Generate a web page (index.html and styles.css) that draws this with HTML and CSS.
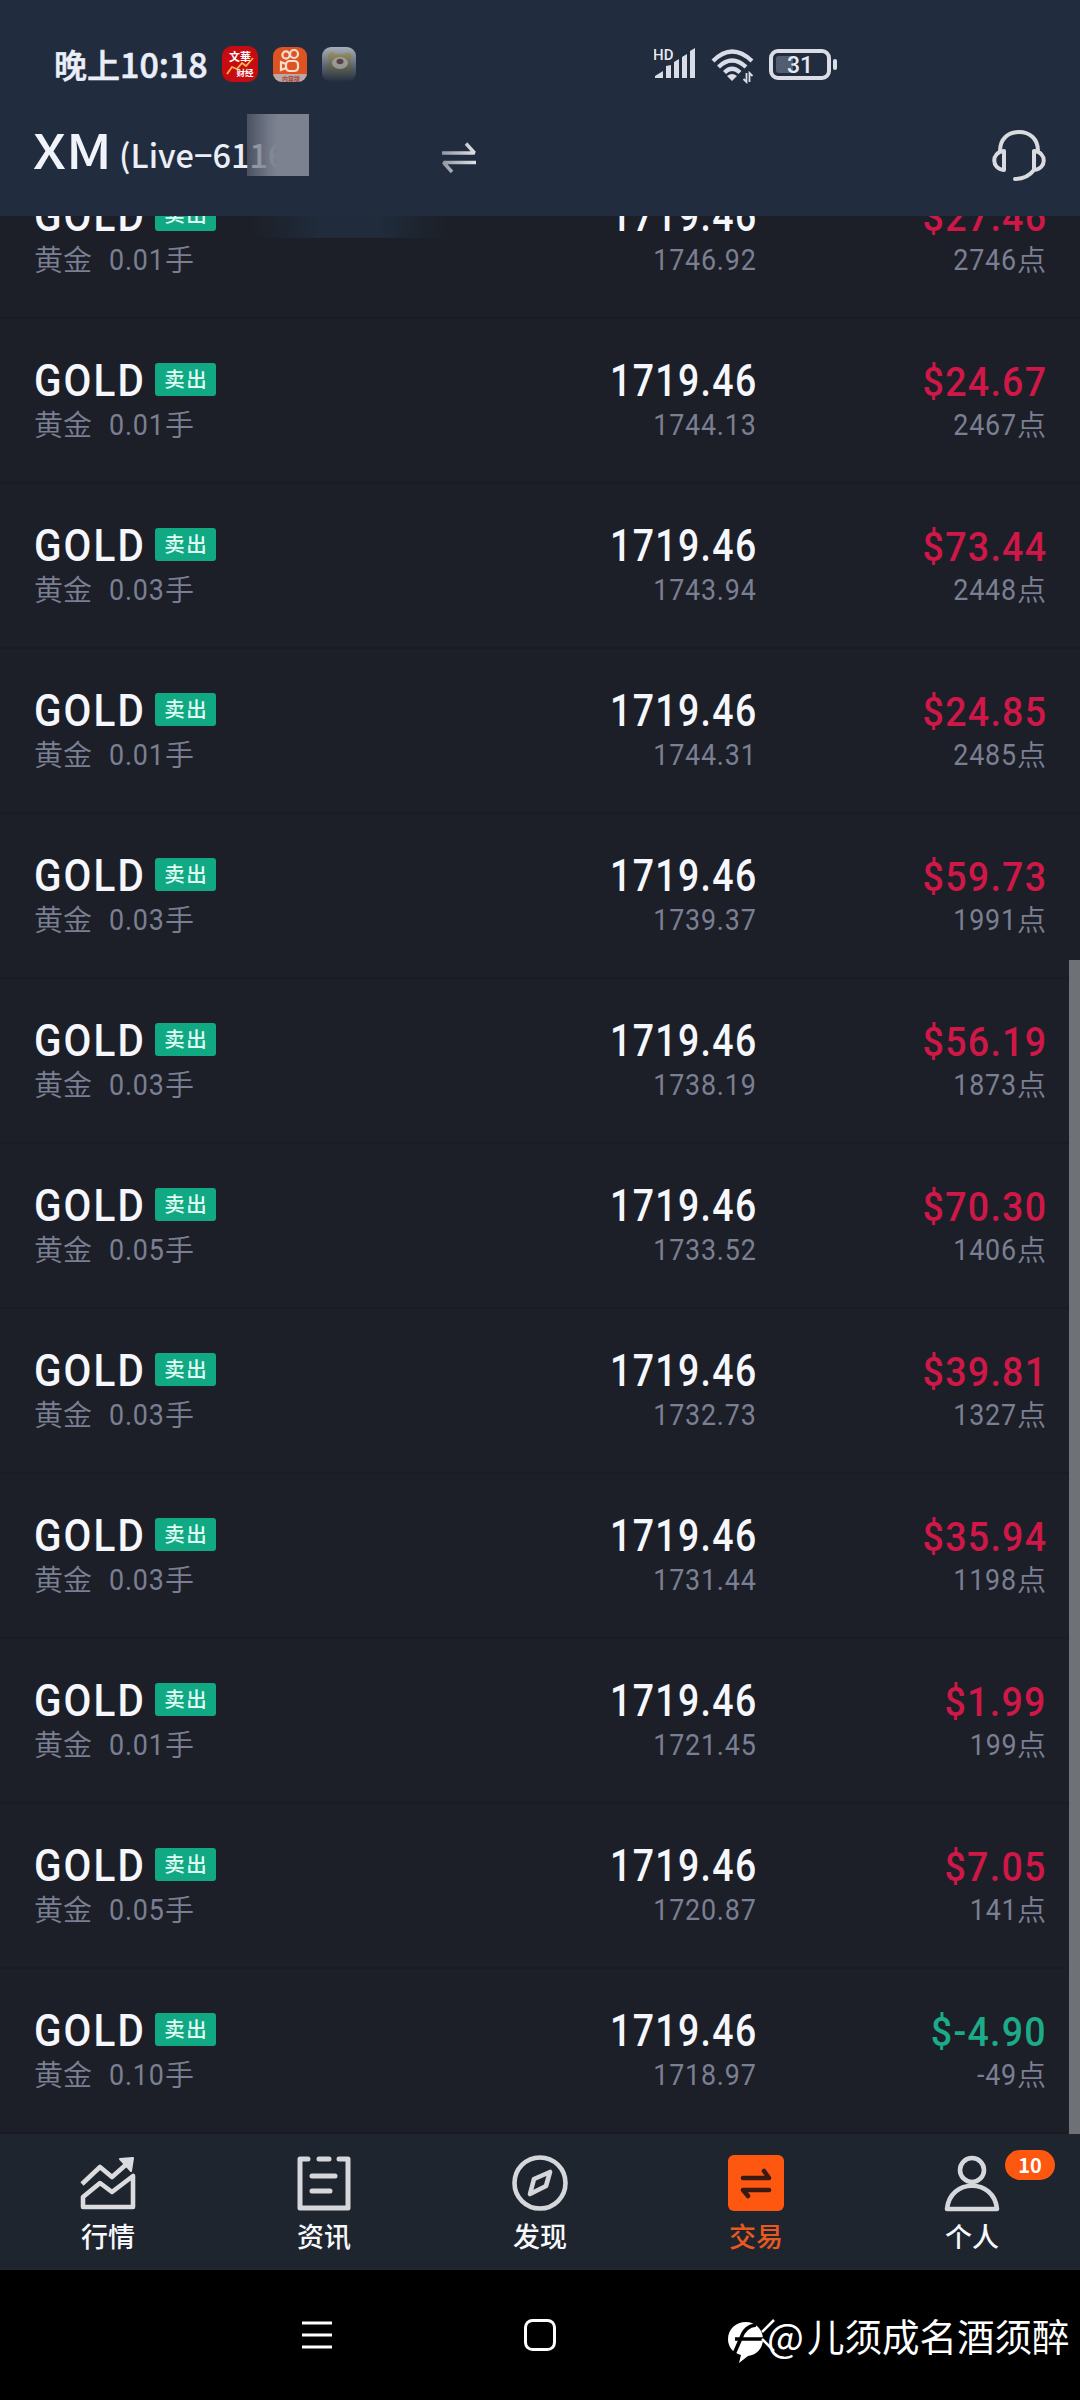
FILE: index.html
```html
<!DOCTYPE html>
<html lang="zh-CN">
<head>
<meta charset="utf-8">
<title>交易</title>
<link rel="stylesheet" href="styles.css">
</head>
<body>
<div class="screen">
  <header class="header">
    <div class="status">
      <span class="clock"><span class="clock-cn">晚上</span>10:18</span>
      <div class="notices">
        <svg width="36" height="36" viewBox="0 0 36 36"><rect width="36" height="36" rx="10" fill="#c60c10"/><text x="18" y="15" class="mini" font-size="11" text-anchor="middle">文華</text><path d="M5 28l5-7 5 2 5-6 4 3 7-8" fill="none" stroke="#ffb54a" stroke-width="1.8"/><text x="23" y="30" class="mini" font-size="8.5" text-anchor="middle">财经</text></svg>
        <svg width="34" height="35" viewBox="0 0 34 35"><defs><clipPath id="ks"><rect width="34" height="35" rx="9"/></clipPath></defs><g clip-path="url(#ks)"><rect width="34" height="35" fill="#dd5422"/><rect y="27" width="34" height="8" fill="#b9a8a5"/></g><g fill="none" stroke="#f6ddcf" stroke-width="2.2"><circle cx="13" cy="8" r="3.6"/><circle cx="21" cy="7" r="4"/><rect x="13" y="14" width="12" height="10" rx="3.5"/><path d="M13 17l-5-2v8l5-2"/></g><text x="18" y="33.500" font-size="6" class="mini red" text-anchor="middle">内容版</text></svg>
        <svg width="34" height="35" viewBox="0 0 34 35"><defs><linearGradient id="fade" x2="0" y2="1"><stop stop-color="#a9afba"/><stop offset=".5" stop-color="#626b76"/><stop offset="1" stop-color="#212c3e"/></linearGradient><linearGradient id="bear" x2="0" y2="1"><stop stop-color="#9a8f50"/><stop offset="1" stop-color="#3a4144"/></linearGradient></defs><rect width="34" height="35" rx="9" fill="url(#fade)"/><path d="M8 30q-5-7-1-16-3-6 1-9 4-1 5 2h9q2-3 6-1 3 3 0 8 4 9 0 16z" fill="url(#bear)" opacity=".75"/><ellipse cx="18" cy="16" rx="8" ry="6" fill="#a7aaac" opacity=".75"/><ellipse cx="18" cy="14.500" rx="3.500" ry="2.800" fill="#574347"/></svg>
      </div>
      <div class="signals">
        <svg class="cell" width="42" height="32" viewBox="0 0 42 32"><text x="-1" y="12" font-size="15" class="hd">HD</text><path d="M1 30v-2l8-5v7zM12 18l5-1v13h-5zM20 14l5-3v19h-5zM28 9l5-3v24h-5zM36 3l5-3v30h-5z" fill="#dadde6"/></svg>
        <svg class="wifi" width="44" height="36" viewBox="0 0 44 36"><g fill="none" stroke="#dadde6" stroke-width="4.2"><path d="M2 13Q21-6 41 13M7.5 19Q21 6 35 19M13.500 24.500Q21 17 29 24.500"/></g><path d="M16 28q5-4 10 0l-5 5z" fill="#dadde6"/><path d="M35.500 25v9l-3-3M38.500 34v-9l3 3" fill="none" stroke="#dadde6" stroke-width="1.8"/></svg>
        <svg width="70" height="31" viewBox="0 0 70 31"><rect x="2" y="2" width="58" height="27" rx="7" fill="none" stroke="#dadde6" stroke-width="4"/><rect x="7" y="7" width="17" height="17" rx="3" fill="#535d70"/><path d="M66 12v7" stroke="#dadde6" stroke-width="4" stroke-linecap="round"/><text x="31" y="23.500" font-size="23" text-anchor="middle" class="batt">31</text></svg>
      </div>
    </div>
    <div class="account">
      <h1 class="broker">XM</h1>
      <span class="login">(Live−6116</span>
      <svg class="swap" width="36" height="32" viewBox="0 0 36 32"><defs><linearGradient id="sw"><stop stop-color="#9297a3"/><stop offset="1" stop-color="#dfe1e5"/></linearGradient></defs><path d="M1 11h32.500L25 1.500M35 20.500H2.500L11 30" fill="none" stroke="url(#sw)" stroke-width="3.400" stroke-linejoin="bevel"/></svg>
      <svg class="headset" width="54" height="52" viewBox="0 0 54 52"><g fill="none" stroke="#d9dbdf" stroke-width="4" stroke-linecap="round" stroke-linejoin="round"><path d="M8 21C8 9 16 2 27 2s19 7 19 19M12 21v19C-1 39-1 22 12 21zM42 21v19c13-1 13-18 0-19zM42 40q-7 9-19 9"/></g></svg>
      <span class="mask"></span>
    </div>
    <span class="smudge"></span>
  </header>
  <main class="positions" id="positions"></main>
  <nav class="tabs">
    <a class="tab"><svg width="56" height="58" viewBox="0 0 56 58"><g fill="none" stroke="#dcdcdf" stroke-width="4.600" stroke-linejoin="round"><path d="M2 30l18-17 12 10L49 8"/><path d="M3 53V43l17-14 12 9 21-16v31z"/></g><path d="M40 5l13-1-2 13z" fill="#dcdcdf" stroke="#dcdcdf" stroke-width="2" stroke-linejoin="round"/></svg>行情</a>
    <a class="tab"><svg width="56" height="58" viewBox="0 0 56 58"><g fill="none" stroke="#d5d7da" stroke-width="5" stroke-linecap="round" stroke-linejoin="round"><path d="M12 5H4v49h48V5h-9M23 5h10M16 22h23M16 37h18"/></g></svg>资讯</a>
    <a class="tab"><svg width="56" height="58" viewBox="0 0 56 58"><g fill="none" stroke="#d5d7da" stroke-width="4.600" stroke-linejoin="round"><circle cx="28" cy="29" r="25.500"/><path d="M38 18l-4 14-16 8 4-15z"/></g></svg>发现</a>
    <a class="tab active"><svg width="56" height="58" viewBox="0 0 56 58"><rect y="1" width="56" height="56" rx="6" fill="#fd5710"/><g fill="none" stroke="#3c1a14" stroke-width="4.600" stroke-linecap="round" stroke-linejoin="round"><path d="M15 24h26l-5-7M41 36H15l5 6"/></g></svg>交易</a>
    <a class="tab"><svg width="56" height="58" viewBox="0 0 56 58"><g fill="none" stroke="#d5d7da" stroke-width="4.600" stroke-linejoin="round"><circle cx="28" cy="16" r="12"/><path d="M3 55c3-31 47-31 50 0z"/></g></svg>个人<span class="badge">10</span></a>
  </nav>
  <footer class="sysnav">
    <svg class="menu" width="30" height="30" viewBox="0 0 30 30"><path d="M0 3h30M0 15h30M0 27h30" stroke="#fff" stroke-width="3"/></svg>
    <svg class="home" width="32" height="32" viewBox="0 0 32 32"><rect x="1.500" y="1.500" width="29" height="29" rx="7" fill="none" stroke="#fff" stroke-width="3"/></svg>
    <div class="credit">
      <svg width="50" height="44" viewBox="0 0 50 44"><path d="M18 1c9 0 17 7 17 17 0 9-6 16-15 17l-9 7 2-8C5 32 0 26 0 18 0 8 8 1 18 1z" fill="#fff"/><path d="M6 33l7-16Q17 5 28 4M7 18h28" fill="none" stroke="#000" stroke-width="3.600"/><path d="M34 11L46-1M34 18l12 12" stroke="#fff" stroke-width="2.500"/></svg>
      <span class="at">@</span><span>儿须成名酒须醉</span>
    </div>
  </footer>
  <span class="scrollbar"></span>
</div>
<script src="app.js"></script>
</body>
</html>
```
FILE: styles.css
```css
* { box-sizing: border-box; }
body { margin: 0; background: #000; font-family: Roboto, "Noto Sans CJK SC", sans-serif; }
.screen { position: relative; width: 1080px; height: 2400px; display: flex; flex-direction: column; overflow: hidden; }

.header { position: relative; z-index: 1; height: 216px; flex: none; padding-top: 25px; background: #212c3e; }
.status { display: flex; align-items: center; height: 78px; padding-left: 54px; }
.clock { display: flex; align-items: center; width: 168px; font: 500 34px/40px "Noto Sans CJK SC", sans-serif; color: #e9eef8; white-space: nowrap; -webkit-text-stroke: .6px #e9eef8; }
.clock-cn { font-size: 33px; }
.notices { display: flex; align-items: center; gap: 15px; }
.mini { font-family: "Noto Sans CJK SC", sans-serif; font-weight: 700; fill: #fff; }
.mini.red { fill: #a9463d; }
.signals { display: flex; align-items: center; margin-left: 298px; }
.wifi { margin: 3px 14px 0 15px; }
.hd, .batt { font-family: Roboto, sans-serif; font-weight: 500; fill: #e6e9f1; }
.account { display: flex; align-items: flex-start; position: relative; padding-left: 33px; height: 80px; margin-top: 3px; }
.broker { margin: 7px 0 0; width: 86px; font: 500 48px/70px "Noto Sans CJK SC", sans-serif; color: #f1f3fa; transform: scaleX(1.15); transform-origin: 0 50%; }
.login { margin-top: 25px; width: 322px; font: 500 32.5px/46px "Noto Sans CJK SC", sans-serif; color: #eceef5; white-space: nowrap; }
.swap { margin-top: 36px; }
.headset { margin: 24px 0 0 515px; }
.mask { position: absolute; left: 247px; top: 8px; width: 62px; height: 62px; background: linear-gradient(90deg, rgba(100,106,120,.6), rgba(123,128,142,.9) 35%, #7d8290 50%); }
.smudge { position: absolute; left: 250px; top: 216px; width: 200px; height: 22px; background: linear-gradient(90deg, transparent, #202b3b 35%, #202b3b 65%, transparent); }

.positions { flex: 1; overflow: hidden; background: #1c1f27; }
.row { display: grid; grid-template-columns: 362px 361px 289px; height: 165px; padding: 43px 34px 0; border-bottom: 2px solid #191c23; }
.row:first-child { margin-top: -62px; }
.top { display: flex; align-items: center; height: 36px; }
.bottom { height: 36px; margin-top: 9px; display: flex; align-items: center; font-size: 29.5px; line-height: 36px; color: #7b7f93; }
.row .right { display: flex; flex-direction: column; align-items: flex-end; }
.name, .price, .profit { padding-top: 3px; line-height: 36px; font-weight: 500; white-space: nowrap; }
.name, .price { font-size: 43.5px; color: #f5f7fc; }
.name { width: 121px; letter-spacing: 2.2px; transform: scaleX(.93); transform-origin: 0 50%; }
.price { transform: scaleX(.86); transform-origin: 100% 50%; letter-spacing: 1.6px; margin-right: -1px; }
.tag { width: 61px; height: 33px; margin-top: -1px; border-radius: 3px; background: #11a884; color: #dffbf2; font: 500 20.5px/31px "Noto Sans CJK SC", sans-serif; text-align: center; letter-spacing: 1.5px; text-indent: 1.5px; }
.cn { font-family: "Noto Sans CJK SC", sans-serif; font-weight: 350; margin-top: -5px; }
.left .cn, .right .cn { font-size: 29px; }
.num { letter-spacing: .9px; transform: scaleX(.91); transform-origin: 100% 50%; }
.lots { margin-left: 17px; transform-origin: 0 50%; width: 56px; }
.profit { font-size: 41px; color: #cf1748; letter-spacing: 1.4px; transform: scaleX(.915); transform-origin: 100% 50%; margin-right: -1px; }
.profit.loss { color: #1bab88; }

.scrollbar { position: absolute; z-index: 2; right: 0; top: 960px; width: 11px; height: 1174px; background: #6e7276; }
.tabs { flex: none; height: 136px; display: grid; grid-template-columns: repeat(5, 1fr); background: #1e252f; }
.tab { position: relative; display: flex; flex-direction: column; align-items: center; padding-top: 20px; font: 500 27px/40px "Noto Sans CJK SC", sans-serif; color: #f7f8fb; }
.tab svg { margin-bottom: 4px; }
.tab.active { color: #e9581f; }
.badge { position: absolute; left: 141px; top: 16px; width: 50px; height: 30px; border-radius: 15px; background: #fd5710; color: #fff; font-size: 20px; font-weight: 700; line-height: 29px; text-align: center; }
.sysnav { flex: none; height: 130px; display: grid; grid-template-columns: 302px 222px 204px 1fr; padding-top: 49px; align-items: start; background: #000; }
.menu { grid-column: 2; margin-top: 1px; }
.credit { display: flex; align-items: flex-start; margin-top: -4px; color: #fff; font: 400 37.5px/40px "Noto Sans CJK SC", sans-serif; white-space: nowrap; }
.credit svg { flex: none; margin: 6px -11px 0 0; overflow: visible; }
.at { width: 40px; font-size: 39px; }
```
FILE: app.js
```js
const trades = [
  ['0.01', '1746.92', '27.46', '2746'],
  ['0.01', '1744.13', '24.67', '2467'],
  ['0.03', '1743.94', '73.44', '2448'],
  ['0.01', '1744.31', '24.85', '2485'],
  ['0.03', '1739.37', '59.73', '1991'],
  ['0.03', '1738.19', '56.19', '1873'],
  ['0.05', '1733.52', '70.30', '1406'],
  ['0.03', '1732.73', '39.81', '1327'],
  ['0.03', '1731.44', '35.94', '1198'],
  ['0.01', '1721.45', '1.99', '199'],
  ['0.05', '1720.87', '7.05', '141'],
  ['0.10', '1718.97', '-4.90', '-49']
];
document.getElementById('positions').innerHTML = trades.map(([lots, open, profit, points]) => `
  <article class="row">
    <div class="left">
      <div class="top"><span class="name">GOLD</span><span class="tag">卖出</span></div>
      <div class="bottom"><span class="cn">黄金</span><span class="num lots">${lots}</span><span class="cn">手</span></div>
    </div>
    <div class="right">
      <div class="top"><span class="price">1719.46</span></div>
      <div class="bottom"><span class="num">${open}</span></div>
    </div>
    <div class="right">
      <div class="top"><span class="profit${profit < 0 ? ' loss' : ''}">$${profit}</span></div>
      <div class="bottom"><span class="num">${points}</span><span class="cn">点</span></div>
    </div>
  </article>`).join('');
```
